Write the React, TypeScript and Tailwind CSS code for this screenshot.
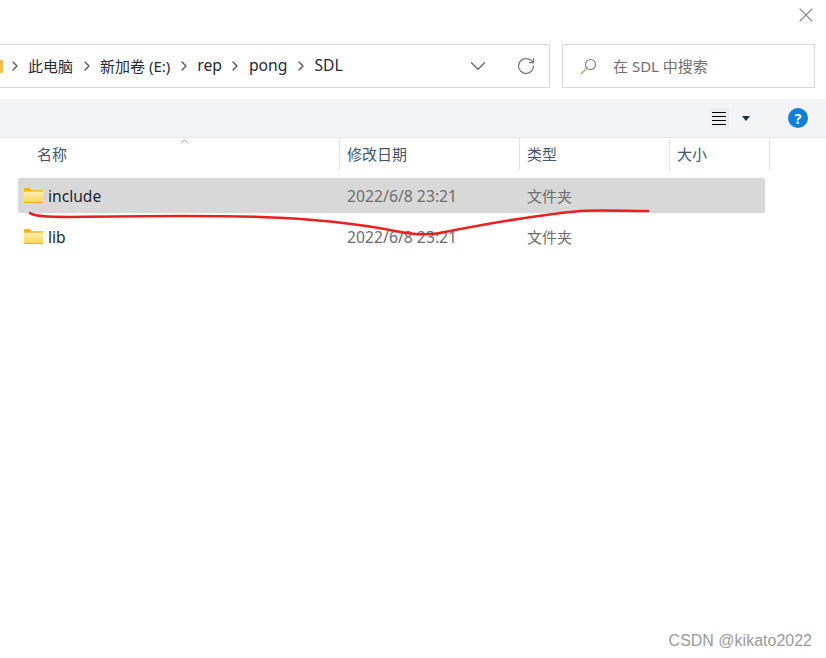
import { ChevronDown, ChevronRight, ChevronUp, RotateCw, X } from "lucide-react";

const crumbs = [
  { label: "此电脑", size: "text-[15px]" },
  { label: "新加卷 (E:)", size: "text-[15px]" },
  { label: "rep", size: "text-[15.7px]" },
  { label: "pong", size: "text-[15.7px]" },
  { label: "SDL", size: "text-[15.7px]" },
];

const columns = [
  { label: "名称", width: "w-[340px]", pad: "pl-[37px]" },
  { label: "修改日期", width: "w-[180px]", pad: "pl-[7px]" },
  { label: "类型", width: "w-[150px]", pad: "pl-[7px]" },
  { label: "大小", width: "w-[100px]", pad: "pl-[7px]" },
];

const rows = [
  { name: "include", selected: true },
  { name: "lib", selected: false },
];

function FolderIcon({ id }: { id: string }) {
  return (
    <svg width="19" height="15" viewBox="0 0 19 15" className="shrink-0">
      <defs>
        <linearGradient id={id} x1="0" y1="0" x2="0" y2="1">
          <stop offset="0" stopColor="#ffeeb0" />
          <stop offset="1" stopColor="#ffd662" />
        </linearGradient>
      </defs>
      <path d="M0 1.2C0 .5.5 0 1.2 0h4.6l2 2.2H19V4H0z" fill="#f7b614" />
      <rect x="0" y="3" width="19" height="12" rx="0.8" fill="#f0ad1c" />
      <rect x="0" y="3.6" width="19" height="10.4" fill={`url(#${id})`} />
    </svg>
  );
}

function SearchIcon() {
  return (
    <svg width="17" height="17" viewBox="0 0 17 17" fill="none">
      <circle cx="10.5" cy="6.5" r="5" stroke="#7a7a7a" strokeWidth="1.1" />
      <path d="M6.8 10.2 1 16" stroke="#c08a5a" strokeWidth="1.2" />
    </svg>
  );
}

function ListIcon() {
  return (
    <div className="flex h-5 w-5 flex-col items-center justify-center gap-[3px] bg-[#eeeff0]">
      <span className="h-px w-[14px] bg-black" />
      <span className="h-px w-[14px] bg-black" />
      <span className="h-px w-[14px] bg-black" />
      <span className="h-px w-[14px] bg-black" />
    </div>
  );
}

export default function App() {
  return (
    <div className="relative h-[658px] w-[826px] overflow-hidden bg-white font-['Noto_Sans','Noto_Sans_CJK_SC',sans-serif] text-[15px] text-[#1f2a36]">
      <div className="flex h-[44px] justify-end pr-[8px] pt-[3px]">
        <X className="h-6 w-6 text-[#8a8a8a]" strokeWidth={1.1} />
      </div>

      <div className="flex h-[44px] gap-[12px]">
        <div className="flex w-[550px] items-center border border-l-0 border-[#d9d9d9]">
          <div className="h-[13px] w-[3px] bg-[#f7c04a]" />
          <div className="-ml-[2px] flex flex-1 items-center">
            {crumbs.map((crumb) => (
              <div key={crumb.label} className="flex items-center">
                <ChevronRight className="mx-[5.5px] h-4 w-4 text-[#555]" strokeWidth={2} />
                <span className={`${crumb.size} leading-none`}>{crumb.label}</span>
              </div>
            ))}
          </div>
          <ChevronDown className="mr-[25px] h-[26px] w-[26px] text-[#666]" strokeWidth={1.2} />
          <RotateCw className="mr-[13px] h-5 w-5 text-[#777]" strokeWidth={1.5} />
        </div>
        <div className="flex w-[253px] items-center border border-[#d9d9d9] pl-[17px]">
          <SearchIcon />
          <span className="ml-[16px] text-[#6f6f6f]">在 SDL 中搜索</span>
        </div>
      </div>

      <div className="mt-[11px] flex h-[39px] items-center justify-end border-b border-[#e6e7e8] bg-[#f3f4f6] pr-[18px]">
        <ListIcon />
        <span className="ml-[13px] h-0 w-0 border-x-[4px] border-t-[5px] border-x-transparent border-t-[#1f2f52]" />
        <div className="ml-[38px] flex h-5 w-5 items-center justify-center rounded-full bg-[#0f7fd8] text-[14px] font-bold text-white">
          ?
        </div>
      </div>

      <div className="relative flex h-[32px]">
        <ChevronUp className="absolute left-[178px] top-[-3px] h-[13px] w-[13px] text-[#666]" strokeWidth={1.2} />
        {columns.map((col) => (
          <div
            key={col.label}
            className={`${col.width} ${col.pad} flex shrink-0 items-center border-r border-[#e3e3e3] text-[#44546a]`}
          >
            {col.label}
          </div>
        ))}
      </div>

      <div className="ml-[18px] mt-[8px] flex w-[747px] flex-col gap-[6px]">
        {rows.map((row) => (
          <div
            key={row.name}
            className={`flex h-[35px] items-center rounded-[2px] ${row.selected ? "bg-[#d8d8d8]" : ""}`}
          >
            <div className="flex w-[329px] items-center pl-[6px]">
              <FolderIcon id={`folder-${row.name}`} />
              <span className="ml-[5px] mt-[2px] text-[15.6px] text-[#1a2633]">{row.name}</span>
            </div>
            <span className="mt-[2px] w-[180px] text-[15.75px] text-[#6d6d6d]">2022/6/8 23:21</span>
            <span className="mt-[2px] text-[#6d6d6d]">文件夹</span>
          </div>
        ))}
      </div>

      {/* hand drawn red underline */}
      <svg className="absolute left-0 top-0" width="826" height="260" fill="none">
        <path
          d="M30 213C33 216 45 217 70 217C130 216 200 215 260 217C320 219 360 224 395 231C410 234 425 236 440 233C480 225 530 216 580 211C600 210 625 211 648 211"
          stroke="#e8201f"
          strokeWidth="2.5"
          strokeLinecap="round"
        />
      </svg>

      <div className="absolute bottom-[5px] right-[14px] font-['Liberation_Sans',sans-serif] text-[16px] text-[#9a9a9a]">
        CSDN @kikato2022
      </div>
    </div>
  );
}
